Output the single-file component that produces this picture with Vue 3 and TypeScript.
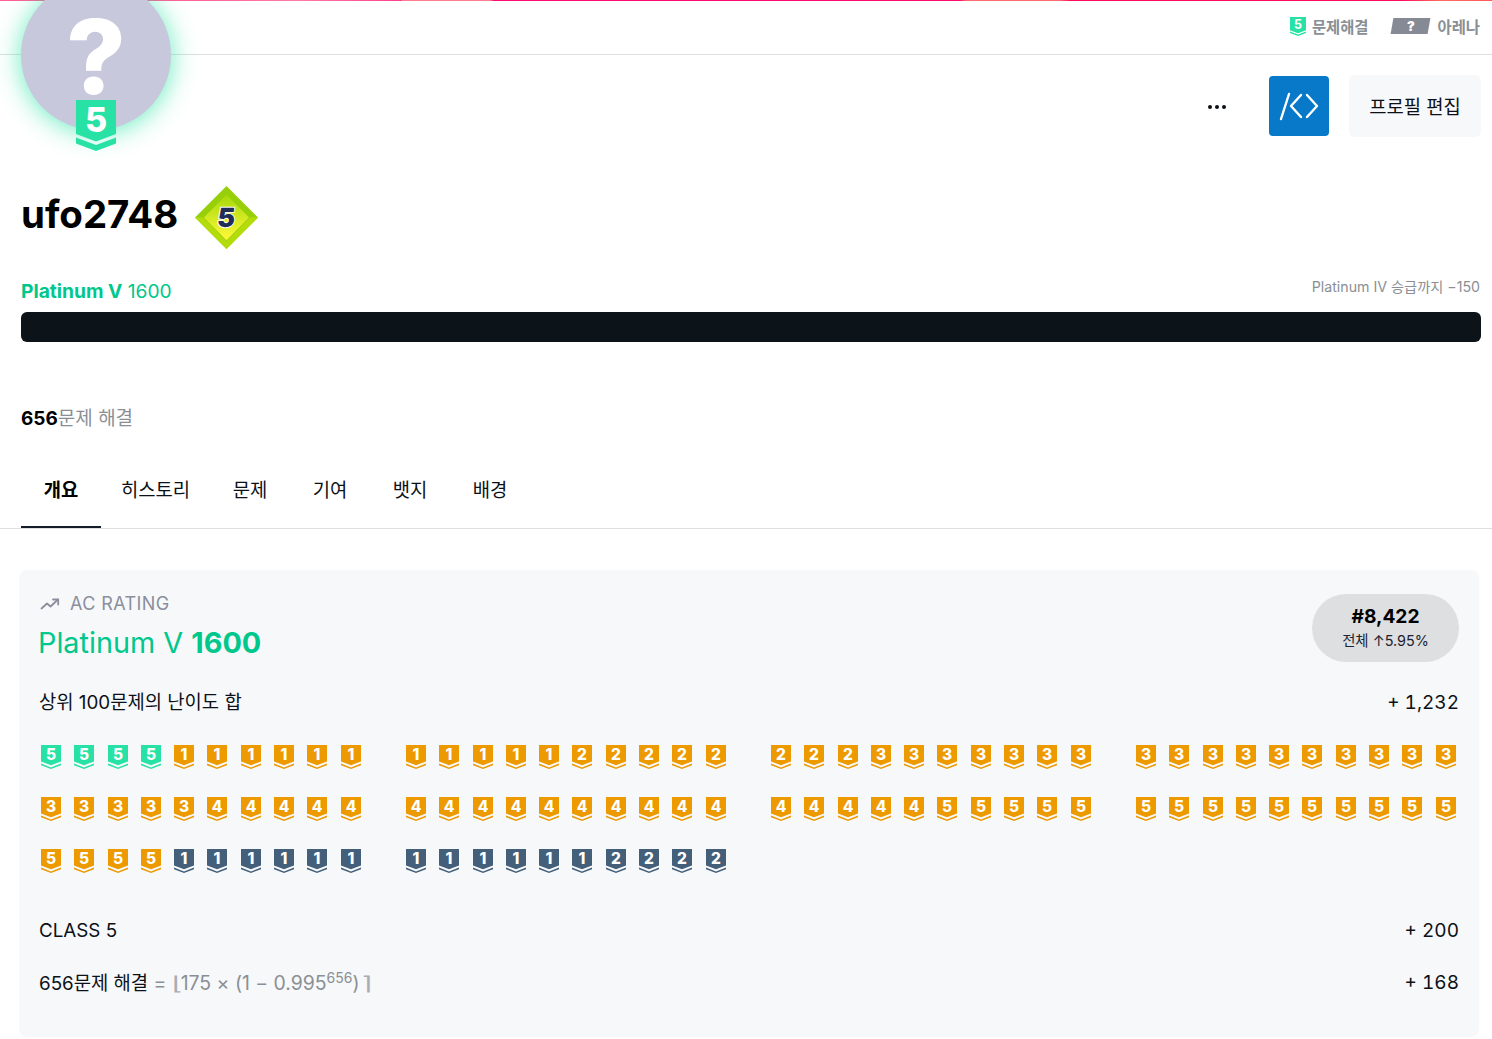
<script setup lang="ts">
type Tier = 'plat' | 'gold' | 'silver'
interface Badge { tier: Tier; n: number }
type Run = [Tier, number, number]
function seq(list: Run[]): Badge[] {
  const out: Badge[] = []
  for (const [tier, n, c] of list) for (let i = 0; i < c; i++) out.push({ tier, n })
  return out
}
const groups: Badge[][] = [
  seq([['plat', 5, 4], ['gold', 1, 6], ['gold', 3, 5], ['gold', 4, 5], ['gold', 5, 4], ['silver', 1, 6]]),
  seq([['gold', 1, 5], ['gold', 2, 5], ['gold', 4, 10], ['silver', 1, 6], ['silver', 2, 4]]),
  seq([['gold', 2, 3], ['gold', 3, 7], ['gold', 4, 5], ['gold', 5, 5]]),
  seq([['gold', 3, 10], ['gold', 5, 10]]),
]
const tabs = ['개요', '히스토리', '문제', '기여', '뱃지', '배경']
const fill: Record<Tier, string> = { plat: '#27e2a4', gold: '#ec9a00', silver: '#435f7a' }
</script>

<template>
  <div class="page">
    <div class="strip" />
    <header class="topbar">
      <div class="top-item">
        <svg class="mini" viewBox="0 0 16 19"><path fill="#27e2a4" d="M0 0h16v13.2l-8 3-8-3z" /><path fill="#27e2a4" d="M0 14.6l8 3 8-3v1.4l-8 3-8-3z" /><text x="8" y="11.6" class="mini-n">5</text></svg>
        <span>문제해결</span>
      </div>
      <div class="top-item arena-item">
        <span class="arena"><b>?</b></span>
        <span>아레나</span>
      </div>
    </header>

    <div class="avatar">
      <span class="qmark">?</span>
      <svg class="avatar-badge" viewBox="0 0 40 51"><path fill="#27e2a4" d="M0 0h40v34l-20 7.5L0 34z" /><path fill="#27e2a4" d="M0 37.5l20 7.5 20-7.5V43.5L20 51 0 43.5z" /><text x="20" y="32" class="ab-n">5</text></svg>
    </div>

    <section class="profile">
      <div class="actions">
        <span class="dots"><i /><i /><i /></span>
        <span class="code-btn">
          <svg viewBox="0 0 60 60" width="60" height="60" fill="none" stroke="#fff" stroke-width="2.4" stroke-linecap="round" stroke-linejoin="round"><path d="M12 43 20 18" /><path d="M32 19 22 30 32 41" /><path d="M38 19 48 30 38 41" /></svg>
        </span>
        <span class="edit-btn">프로필 편집</span>
      </div>

      <div class="name-row">
        <h1>ufo2748</h1>
        <svg class="diamond" viewBox="0 0 64 64">
          <defs>
            <linearGradient id="dia" x1="0" y1="0" x2="0" y2="1"><stop offset="0" stop-color="#a5d90a" /><stop offset="1" stop-color="#fff93a" /></linearGradient>
          </defs>
          <path fill="#97cf0a" d="M32 0 64 32 32 64 0 32z" />
          <path fill="#b4dc0b" d="M32 64 0 32 8 32 32 56 56 32 64 32z" />
          <path fill="url(#dia)" d="M32 9 55 32 32 55 9 32z" />
          <text x="32" y="42" class="dia-n">5</text>
        </svg>
      </div>

      <div class="rating-head">
        <span class="rating-tier"><b>Platinum V</b> 1600</span>
        <span class="rating-next">Platinum IV 승급까지 −150</span>
      </div>
      <div class="bar" />

      <p class="solved"><b>656</b><span>문제 해결</span></p>
    </section>

    <nav class="tabs">
      <a v-for="(t, i) in tabs" :key="t" :class="{ active: i === 0 }">{{ t }}</a>
    </nav>

    <section class="card">
      <div class="card-head">
        <div>
          <div class="eyebrow">
            <svg width="20" height="12" viewBox="0 0 20 12" fill="none" stroke="#8a8f9c" stroke-width="1.8" stroke-linejoin="round" stroke-linecap="round"><path d="M1.5 10.5 7 5.5 10.5 8.5 18 1.5" /><path d="M13 1.5h5.2v5" /></svg>
            <span>AC RATING</span>
          </div>
          <div class="big-tier">Platinum V <b>1600</b></div>
        </div>
        <div class="rank-pill">
          <strong>#8,422</strong>
          <span>전체 ↑5.95%</span>
        </div>
      </div>

      <div class="line"><span class="label">상위 100문제의 난이도 합</span><span class="num">+ 1,232</span></div>

      <div class="badges">
        <div v-for="(g, gi) in groups" :key="gi" class="badge-group">
          <svg v-for="(b, i) in g" :key="i" class="bd" viewBox="0 0 20 24">
            <path :fill="fill[b.tier]" d="M0 0h20v16.4l-10 3.8L0 16.4z" />
            <path :fill="fill[b.tier]" d="M0 18.6l10 3.8 10-3.8V20.2L10 24 0 20.2z" />
            <text x="10" y="14.8" class="bd-n">{{ b.n }}</text>
          </svg>
        </div>
      </div>

      <div class="line class-line"><span class="label">CLASS 5</span><span class="num">+ 200</span></div>
      <div class="line formula">
        <span class="label">656문제 해결 <em>= <i class="fl">⌊</i>175 × (1 − 0.995<sup>656</sup>)<i class="ce">⌉</i></em></span>
        <span class="num">+ 168</span>
      </div>
    </section>
  </div>
</template>

<style scoped>
.page {
  position: relative;
  width: 1492px;
  height: 1039px;
  overflow: hidden;
  background: #fff;
  color: #0c1117;
  font-family: Inter, "Noto Sans CJK KR", sans-serif;
}
.strip {
  height: 1px;
  background: linear-gradient(90deg, #ff5f95 0, #ff5f95 170px, #ff7aa8 300px, #ff3d8e 400px, #ff0f78 395px, #ff0f78 400px, #ff7d90 402px, #ff7d90 490px, #ff0a78 494px, #ff0a70 960px, #ff6a70 966px, #ff6a70 1060px, #ff0a5c 1070px, #ff0a5c 1400px, #ff6a60 1440px, #ff5a5a 1492px);
}
.topbar {
  height: 54px;
  box-sizing: border-box;
  display: flex;
  justify-content: flex-end;
  align-items: center;
  gap: 21px;
  padding: 0 12px 3px 0;
  border-bottom: 1px solid #dddfe0;
  font-size: 15.4px;
  font-weight: 600;
  color: #8a8f95;
}
.top-item { display: flex; align-items: center; gap: 6px; }
.arena-item { gap: 9px; padding-left: 2px; }
.mini { width: 16px; height: 19px; }
.mini-n { fill: #fff; font: 700 12.5px Inter, sans-serif; text-anchor: middle; }
.arena {
  width: 37px;
  height: 16px;
  background: #858a95;
  transform: skewX(-10deg);
  display: flex;
  align-items: center;
  justify-content: center;
  color: #fff;
  font-size: 13px;
}
.arena b { transform: skewX(10deg); }
.avatar {
  position: absolute;
  left: 21px;
  top: -20px;
  width: 150px;
  height: 150px;
  border-radius: 50%;
  background: #c8c8dc;
  box-shadow: 0 2px 26px rgba(39, 226, 164, 0.7);
  display: flex;
  justify-content: center;
}
.qmark {
  color: #fff;
  font: 800 103px/1 Inter, sans-serif;
  margin-top: 24.5px;
  height: 103px;
}
.avatar-badge {
  position: absolute;
  left: 55px;
  top: 120px;
  width: 40px;
  height: 51px;
}
.ab-n { fill: #fff; font: 800 34px Inter, sans-serif; text-anchor: middle; }

.profile { padding: 0 11px 0 21px; }
.actions {
  height: 60px;
  margin-top: 21px;
  display: flex;
  justify-content: flex-end;
  align-items: center;
}
.dots { display: flex; gap: 3px; margin-right: 43px; margin-top: 2px; }
.dots i { width: 4px; height: 4px; border-radius: 50%; background: #0c1117; }
.code-btn {
  width: 60px;
  height: 60px;
  border-radius: 4px;
  background: #0879c8;
  margin-right: 20px;
}
.code-btn svg { display: block; }
.edit-btn {
  width: 132px;
  height: 62px;
  border-radius: 6px;
  background: #f7f8fa;
  display: flex;
  align-items: center;
  justify-content: center;
  font-size: 18.8px;
  padding-bottom: 2px;
  box-sizing: border-box;
}
.name-row { display: flex; align-items: center; gap: 17px; margin-top: 49px; height: 64px; }
h1 { margin: 0; font-size: 38.4px; line-height: 64px; font-weight: 700; color: #000; position: relative; top: -3px; }
.diamond { width: 63px; height: 63px; }
.dia-n { fill: #1f2d57; font: 900 27px Inter, sans-serif; text-anchor: middle; stroke: #fff; stroke-width: 2px; paint-order: stroke; transform-box: fill-box; transform-origin: center; transform: skewX(-6deg); }
.rating-head { display: flex; justify-content: space-between; margin-top: 27px; height: 36px; align-items: flex-start; }
.rating-tier { color: #00c78b; font-size: 19.2px; line-height: 30px; }
.rating-tier b { font-weight: 700; }
.rating-next { color: #8a8f95; font-size: 14.2px; line-height: 22px; margin-right: 1px; }
.bar { height: 30px; border-radius: 6px; background: #0c1319; }
.solved { margin: 62px 0 0; font-size: 19px; line-height: 30px; }
.solved b { font-weight: 700; color: #000; }
.solved span { color: #8a8f95; }
.tabs {
  margin-top: 16px;
  padding-left: 21px;
  height: 78px;
  display: flex;
  border-bottom: 1px solid #dddfe0;
}
.tabs a {
  width: 80px;
  box-sizing: border-box;
  display: flex;
  align-items: center;
  justify-content: center;
  font-size: 18.8px;
  color: #0c1117;
  height: 78px;
  padding: 0 0 2px;
}
.tabs a.active { font-weight: 700; border-bottom: 2px solid #151c29; color: #000; padding: 0; }
.tabs a:nth-child(2) { width: 109px; }
.card {
  margin: 41px 13px 0 19px;
  height: 467px;
  box-sizing: border-box;
  padding: 20px 20px 0;
  border-radius: 8px;
  background: #f7f8fa;
}
.card-head { display: flex; justify-content: space-between; align-items: flex-start; height: 98px; }
.eyebrow { display: flex; align-items: center; gap: 10px; color: #8a8f9c; font-size: 18px; line-height: 27px; letter-spacing: 0.4px; padding-left: 1px; }
.big-tier { color: #00c78b; font-size: 28.8px; line-height: 50px; margin: 1px 0 0 -1px; }
.big-tier b { font-weight: 700; }
.rank-pill {
  width: 147px;
  height: 68px;
  box-sizing: border-box;
  padding-bottom: 2px;
  margin-top: 4px;
  border-radius: 34px;
  background: #dedfe1;
  display: flex;
  flex-direction: column;
  align-items: center;
  justify-content: center;
}
.rank-pill strong { font-size: 19.2px; line-height: 28px; font-weight: 700; color: #000; }
.rank-pill span { font-size: 14.4px; line-height: 22px; color: #1c2330; }
.line { display: flex; justify-content: space-between; font-size: 19px; line-height: 30px; color: #0c1117; }
.label { font-size: 18.8px; }
.num { font-variant-numeric: tabular-nums; }
.badges { margin-top: 27px; padding-left: 1.85px; display: grid; grid-template-columns: repeat(4, 320px); column-gap: 45px; }
.badge-group { display: grid; grid-template-columns: repeat(10, 20px); column-gap: 13.33px; row-gap: 28px; width: 320px; align-content: start; height: 132px; }
.bd { width: 20px; height: 24px; display: block; }
.bd-n { fill: #fff; font: 800 15.5px Inter, sans-serif; text-anchor: middle; }
.class-line { margin-top: 39px; }
.formula { margin-top: 22px; }
.formula em { font-style: normal; color: #8a8f95; font-size: 19.4px; }
.formula i { font-style: normal; font-family: "Noto Sans CJK KR", sans-serif; font-weight: 300; display: inline-block; line-height: 1; color: #a9adb3; }
.formula .fl { width: 9px; transform-origin: left center; transform: scaleX(1.5); }
.formula .ce { width: 9px; margin-left: 2px; transform-origin: right center; transform: scaleX(1.5); text-align: right; }
.formula sup { font-size: 14px; line-height: 0; vertical-align: baseline; position: relative; top: -7px; }
</style>
